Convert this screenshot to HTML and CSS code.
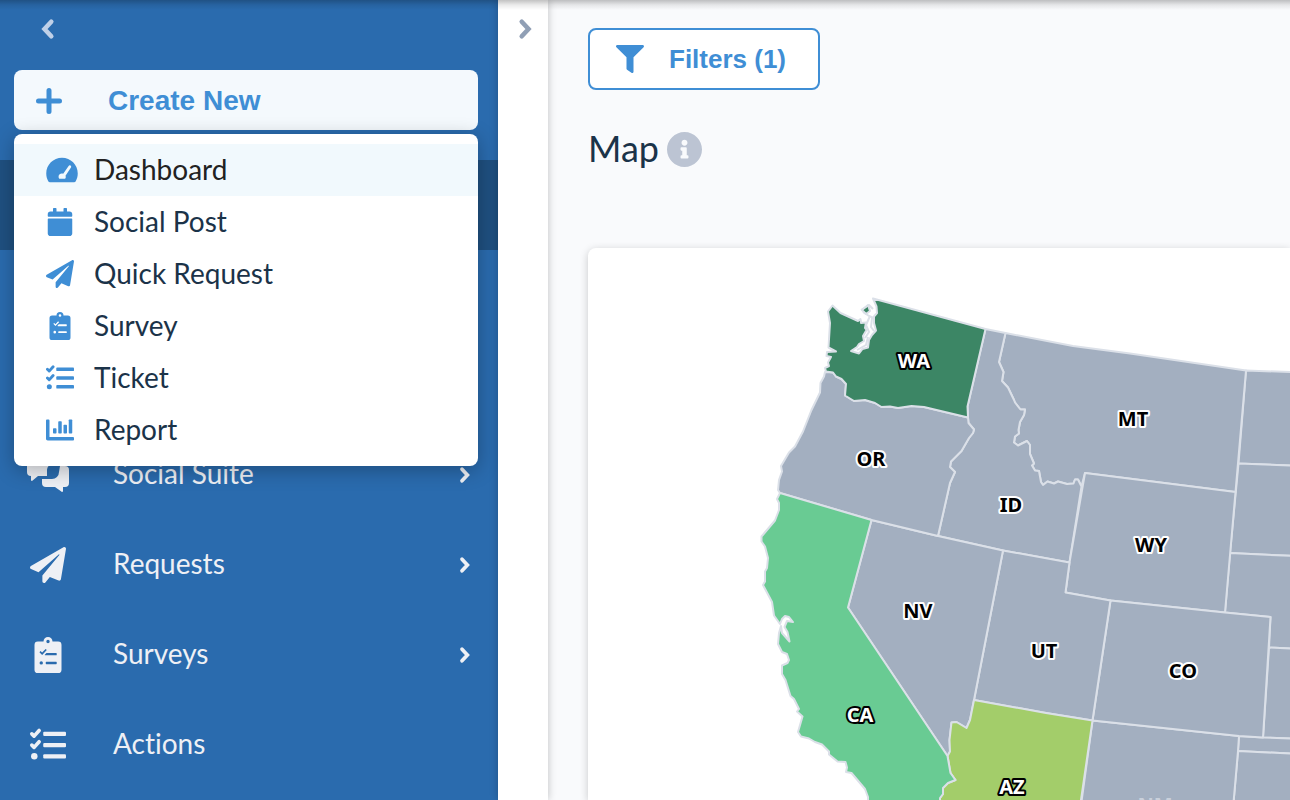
FILE: index.html
```html
<!DOCTYPE html>
<html lang="en">
<head>
<meta charset="utf-8">
<title>Map</title>
<link rel="stylesheet" href="styles.css">
</head>
<body>
<svg class="defs" aria-hidden="true">
  <symbol id="chevron" viewBox="0 0 320 512"><path fill="none" stroke="currentColor" stroke-width="98" stroke-linecap="round" d="M80 100L224 256 80 412"/></symbol>
  <symbol id="plane" viewBox="0 0 512 512"><path d="M476 3.2L12.5 270.6c-18.1 10.4-15.8 35.6 2.2 43.2L121 358.4l287.3-253.2c5.5-4.9 13.3 2.6 8.6 8.3L176 407v80.5c0 23.6 28.5 32.9 42.5 15.8L282 426l124.6 52.2c14.2 6 30.4-2.9 33-18.2l72-432C515 7.8 493.3-6.8 476 3.2z"/></symbol>
  <symbol id="clipboard" viewBox="0 0 512 512"><path fill-rule="evenodd" d="M400 64h-80a64 64 0 0 0-128 0h-80a48 48 0 0 0-48 48v352a48 48 0 0 0 48 48h288a48 48 0 0 0 48-48V112a48 48 0 0 0-48-48zM256 40a24 24 0 1 1 0 48 24 24 0 0 1 0-48zM134 216l16-16 22 22 50-52 17 16-66 70zM234 226h138a8 8 0 0 1 8 8v18a8 8 0 0 1-8 8H218a8 8 0 0 1-8-8zM160 344a24 24 0 1 1 0 48 24 24 0 0 1 0-48zM232 352h140a8 8 0 0 1 8 8v18a8 8 0 0 1-8 8H232a8 8 0 0 1-8-8v-18a8 8 0 0 1 8-8z"/></symbol>
  <symbol id="tasks" viewBox="0 0 512 512"><path fill="none" stroke="currentColor" stroke-width="52" stroke-linecap="round" stroke-linejoin="round" d="M26 98l32 32 72-80M26 258l32 32 72-80"/><circle cx="61" cy="416" r="46"/><rect x="188" y="66" width="324" height="62" rx="16"/><rect x="188" y="226" width="324" height="62" rx="16"/><rect x="188" y="386" width="324" height="62" rx="16"/></symbol>
</svg>
<div class="app">
  <aside class="sidebar">
    <button class="collapse" aria-label="Collapse navigation"><svg class="icon chevron flip"><use href="#chevron"/></svg></button>
    <div class="create">
      <button class="create-button" aria-expanded="true">
        <svg class="plus" viewBox="0 0 26 26"><path d="M13 2.5v21M2.5 13h21"/></svg>
        <span>Create New</span>
      </button>
      <div class="menu" role="menu">
        <button class="menu-item highlighted" role="menuitem"><svg class="icon gauge" viewBox="0 0 576 512"><path fill-rule="evenodd" d="M288 32C129 32 0 161 0 320c0 53 14 102 39 145 6 10 16 15 27 15h444c11 0 21-5 27-15 25-43 39-92 39-145C576 161 447 32 288 32zM443 174c14 9 17 22 9 35L352 361c8 22 7 39-7 55H239c-24-34-16-92 43-98 11 0 20 1 28 5L409 182c8-13 21-15 34-8z"/></svg><span>Dashboard</span></button>
        <button class="menu-item" role="menuitem"><svg class="icon" viewBox="-32 0 512 512"><path d="M12 192h424c6.600 0 12 5.400 12 12v260c0 26.500-21.500 48-48 48H48c-26.500 0-48-21.500-48-48V204c0-6.600 5.400-12 12-12zm436-44v-36c0-26.500-21.500-48-48-48h-48V12c0-6.600-5.400-12-12-12h-40c-6.600 0-12 5.400-12 12v52H160V12c0-6.600-5.400-12-12-12h-40c-6.600 0-12 5.400-12 12v52H48C21.500 64 0 85.500 0 112v36c0 6.600 5.400 12 12 12h424c6.600 0 12-5.400 12-12z"/></svg><span>Social Post</span></button>
        <button class="menu-item" role="menuitem"><svg class="icon"><use href="#plane"/></svg><span>Quick Request</span></button>
        <button class="menu-item" role="menuitem"><svg class="icon"><use href="#clipboard"/></svg><span>Survey</span></button>
        <button class="menu-item" role="menuitem"><svg class="icon"><use href="#tasks"/></svg><span>Ticket</span></button>
        <button class="menu-item" role="menuitem"><svg class="icon" viewBox="0 0 512 512"><path d="M16 64h32c9 0 16 7 16 16v304h432c9 0 16 7 16 16v32c0 9-7 16-16 16H32c-18 0-32-14-32-32V80c0-9 7-16 16-16z"/><rect x="128" y="224" width="64" height="96" rx="14"/><rect x="224" y="96" width="64" height="224" rx="14"/><rect x="320" y="160" width="64" height="160" rx="14"/><rect x="416" y="64" width="64" height="256" rx="14"/></svg><span>Report</span></button>
      </div>
    </div>
    <nav class="nav">
      <div class="nav-current"></div>
      <a class="nav-item" href="#social"><svg class="nav-icon bubbles" viewBox="0 0 40 36"><path d="M4 0h22a4 4 0 0 1 4 4v4h-4a6 6 0 0 0-6 6v6h-9l-6 5q-1 0-1-1v-4a4 4 0 0 1-4-4V4a4 4 0 0 1 4-4z" transform="translate(-1 -1)"/><path d="M32 9h5a4 4 0 0 1 4 4v13a4 4 0 0 1-4 4h-2v4q0 1-1 1l-7-5H18a4 4 0 0 1-4-4v-4h10a7 7 0 0 0 7-7z"/></svg><span>Social Suite</span><svg class="icon arrow"><use href="#chevron"/></svg></a>
      <a class="nav-item" href="#requests"><svg class="nav-icon"><use href="#plane"/></svg><span>Requests</span><svg class="icon arrow"><use href="#chevron"/></svg></a>
      <a class="nav-item" href="#surveys"><svg class="nav-icon"><use href="#clipboard"/></svg><span>Surveys</span><svg class="icon arrow"><use href="#chevron"/></svg></a>
      <a class="nav-item" href="#actions"><svg class="nav-icon"><use href="#tasks"/></svg><span>Actions</span></a>
    </nav>
  </aside>
  <div class="rail">
    <button class="expand" aria-label="Expand panel"><svg class="icon chevron"><use href="#chevron"/></svg></button>
  </div>
  <main class="content">
    <button class="filters">
      <svg class="icon" viewBox="0 0 512 512"><path d="M487.976 0H24.028C2.710 0-8.047 25.866 7.058 40.971L192 225.941V432c0 7.831 3.821 15.170 10.237 19.662l80 55.980C298.020 518.690 320 507.493 320 487.980V225.941l184.947-184.970C520.021 25.896 509.338 0 487.976 0z"/></svg>
      <span>Filters (1)</span>
    </button>
    <div class="heading">
      <h1>Map</h1>
      <svg class="info" viewBox="8 8 496 496"><path d="M256 8C119.043 8 8 119.083 8 256c0 136.997 111.043 248 248 248s248-111.003 248-248C504 119.083 392.957 8 256 8zm0 110c23.196 0 42 18.804 42 42s-18.804 42-42 42-42-18.804-42-42 18.804-42 42-42zm56 254c0 6.627-5.373 12-12 12h-88c-6.627 0-12-5.373-12-12v-24c0-6.627 5.373-12 12-12h12v-64h-12c-6.627 0-12-5.373-12-12v-24c0-6.627 5.373-12 12-12h64c6.627 0 12 5.373 12 12v100h12c6.627 0 12 5.373 12 12v24z"/></svg>
    </div>
    <section class="card">
      <svg class="map" viewBox="588 248 702 552" preserveAspectRatio="xMinYMin slice" role="img" aria-label="Map of states">
        <g class="states">
          <path d="M1246 370.500L1400 376V470L1238.500 463.500z"/>
          <path d="M1238.500 463.500L1400 470V561L1230 553z"/>
          <path d="M1230 553L1400 561V653L1269 647.500 1270.500 617 1225 612.500z"/>
          <path d="M1269 647.500L1400 653V743L1263 737.500z"/>
          <path d="M1239 736L1263 737.500 1400 743V759L1238 751z"/>
          <path d="M1238 751L1400 759V820H1232z"/>
          <path d="M1092.500 720.500L1239 736 1238 751 1232 820H1079z"/>
          <path d="M1005.500 333L1073 346 1130 353.500 1246 370.500 1235.500 492 1085 473 1081.500 486.500 1078 479.500 1075 479.500 1073.500 483.500 1067 484 1058 481.500 1054 483.500 1047.500 481.500 1043 485 1041 482 1039 471 1035 470.500 1032 465.500 1034 463.500 1030 454 1030 445 1027 441 1018 445.500 1014 442.500 1015 436.500 1019 433.500 1018.500 430 1020 422 1024 415 1025 409.500 1020.500 409.500 1015 402.500 1014 400 1008 387.500 1002 381 1003.500 372 999 362z"/>
          <path d="M985.500 329L1005.500 333 999 362 1003.500 372 1002 381 1008 387.500 1014 400 1015 402.500 1020.500 409.500 1025 409.500 1024 415 1020 422 1018.500 430 1019 433.500 1015 436.500 1014 442.500 1018 445.500 1027 441 1030 445 1030 454 1034 463.500 1032 465.500 1035 470.500 1039 471 1041 482 1043 485 1047.500 481.500 1054 483.500 1058 481.500 1067 484 1073.500 483.500 1075 479.500 1078 479.500 1081.500 486.500 1069.500 562.500 1003 550.500 938 536 950 483 955 472 950 467 951 461.500 961.500 451 969 438 973 433 974 429.500 968.500 423 968 417.500 967.500 406.500z"/>
          <path d="M1085 473L1235.500 492 1225 612.500 1110.500 600.500 1065.500 592.500 1069.500 562.500z"/>
          <path d="M1110.500 600.500L1225 612.500 1270.500 617 1263 737.500 1239 736 1092.500 720.500z"/>
          <path d="M1003 550.500L1069.500 562.500 1065.500 592.500 1110.500 600.500 1092.500 720.500 1046 713 974 700z"/>
          <path d="M871.500 520L938 536 1003 550.500 974 700 970 720 966.500 728 956.500 722 951.500 722.500 949.500 740 950 751.500 947.500 756 848 607.500z"/>
          <path d="M825 372L833 372.500 836 376.500 841.500 379 846 384 845 395.500 854 401 865 400 875 403 881.500 407 890 406.500 898 408 911.500 406 924 407 968 417.500 968.500 423 974 429.500 973 433 969 438 961.500 451 951 461.500 950 467 955 472 950 483 938 536 871.500 520 780 493 778 490 779 480 782 471.500 781 466 789 452.500 795 446.500 803 431.500 811.500 410 820 392.500 820.500 383 824 376.500z"/>
          <path class="az" d="M974 700L1046 713 1092.500 720.500 1081 800 1079 820H940L940 798 943 794 943 788 948 783 955.500 780 950.500 773 947.500 756 950 751.500 949.500 740 951.500 722.500 956.500 722 966.500 728 970 720z"/>
          <path class="ca" d="M780 493L777 499 779 503 779 510 775 520.500 761.500 536.500 761.500 541.500 765 546.500 768 558 767 568 765 571.500 765 581.500 763 585 772 602 774 615.500 780 624 782 619 785 616 789 617 793 622 787 621 784.500 627 787.500 632 789.500 641.500 782 633 781 626 779 633 778 644 782 652 787 654 789 660 787.500 663 782 665.500 782 674 785.500 680 790.500 696 794 699 799 709 797 711.500 802.500 716.500 798 732 801 736.500 809 738.500 815 742 822 744.500 829 751.500 829 754.500 837.500 761.500 845.500 762 847 767.500 846 772 851.500 773 865 789 868 797 868 820H940V798L943 794 943 788 948 783 955.500 780 950.500 773 947.500 756 848 607.500 871.500 520z"/>
          <path class="wa" d="M873 298.500L985.500 329 967.500 406.500 968 417.500 924 407 911.500 406 898 408 890 406.500 881.500 407 875 403 865 400 854 401 845 395.500 846 384 841.500 379 836 376.500 833 372.500 826 371.500 825 368 829 366 828 362.500 831 357 826.500 356 827 352 836 351.500 828.500 347.500 830 323 828 311.500 832.500 305.500 840.500 313 858 321 860.500 319 861 323 866 322.500 865 328 866.500 330 863 336 864 341 859 344 857 347 851 351 859 353.500 862.500 349 868 347.500 869 340 872 335 876 330.500 874 323 874 316.500 877 313 876.500 306.500z"/>
          <path class="wa" d="M862 310L868 305 870 311 866 314z"/>
          <path class="coast" d="M861 310L869 305 873 309M863 312L869 316 874 318M870 316L866 325 869 332 865 338M872 318L871 327 874 331M868 337L866 345 857 350"/>
        </g>
        <g class="labels">
          <text x="1133" y="426">MT</text>
          <text x="871" y="466">OR</text>
          <text x="1011" y="512">ID</text>
          <text x="1151" y="552">WY</text>
          <text x="918" y="618">NV</text>
          <text x="1044" y="658">UT</text>
          <text x="1183" y="678">CO</text>
          <text class="faded" x="1155" y="812">NM</text>
          <text class="dark" x="914" y="368">WA</text>
          <text class="dark" x="860" y="722">CA</text>
          <text class="dark" x="1012" y="794">AZ</text>
        </g>
      </svg>
    </section>
  </main>
</div>
</body>
</html>
```
FILE: styles.css
```css
* { box-sizing: border-box; }

body {
  margin: 0;
  font-family: Lato, "Noto Sans", sans-serif;
  font-size: 28px;
  font-variant-ligatures: none;
  color: #1b3349;
  background: #f9fafc;
}

button {
  border: 0;
  padding: 0;
  background: none;
  font: inherit;
  font-variant-ligatures: none;
  color: inherit;
  cursor: pointer;
}

svg { fill: currentColor; flex: none; }
.defs { position: absolute; width: 0; height: 0; }
.icon { display: block; width: 28px; height: 28px; overflow: visible; }
.chevron { width: 15px; height: 24px; }
.flip { transform: scaleX(-1); }

.app {
  display: flex;
  height: 100vh;
  overflow: hidden;
  position: relative;
}

/* shadow cast by the page header */
.app::before {
  content: "";
  position: absolute;
  inset: 0 0 auto;
  height: 10px;
  z-index: 5;
  pointer-events: none;
  background: linear-gradient(rgba(0, 0, 0, .24), rgba(0, 0, 0, .08) 50%, transparent);
}

.sidebar {
  flex: 0 0 498px;
  background: #2a6bae;
  color: #eef0f5;
}

.collapse {
  display: flex;
  align-items: center;
  height: 58px;
  padding: 0 40px;
  color: #bfd0e8;
}

.create {
  position: relative;
  padding: 12px 20px 0 14px;
}

.create-button {
  display: flex;
  align-items: center;
  gap: 46px;
  width: 100%;
  height: 60px;
  padding: 2px 22px 0;
  border-radius: 8px;
  background: #f4f9fd;
  color: #3f8ed5;
  font: bold 28px "Liberation Sans", sans-serif;
}

.plus {
  width: 26px;
  height: 26px;
  stroke: currentColor;
  stroke-width: 5;
  stroke-linecap: round;
}

.menu {
  position: absolute;
  top: 76px;
  left: 14px;
  right: 20px;
  z-index: 2;
  padding: 10px 0;
  border-radius: 8px;
  background: #fff;
  box-shadow: 0 4px 20px rgba(0, 0, 0, .28);
}

.menu-item {
  display: flex;
  align-items: center;
  gap: 20px;
  width: 100%;
  height: 52px;
  padding: 0 32px;
  color: #1b3349;
}

.menu-item span { padding-bottom: 2px; }
.menu-item .icon { color: #3f8ed5; }
.menu-item .gauge { width: 32px; margin-right: -4px; }
.highlighted { background: #f1f9fd; color: #222; }

.nav { padding-top: 30px; }

.nav-current {
  height: 90px;
  margin-bottom: 180px;
  background: #1f5080;
}

.nav-item {
  display: flex;
  align-items: center;
  height: 90px;
  padding: 0 27px 0 28px;
  color: inherit;
  text-decoration: none;
}

.nav-item span { padding-bottom: 4px; }
.nav-icon { width: 40px; height: 36px; margin-right: 45px; overflow: visible; }
.arrow { width: 12px; height: 20px; margin-left: auto; }

.rail {
  flex: 0 0 50px;
  z-index: 1;
  background: #fff;
  box-shadow: 0 0 8px rgba(0, 0, 0, .24);
}

.expand {
  display: flex;
  align-items: center;
  justify-content: center;
  width: 100%;
  height: 58px;
  padding-left: 4px;
  color: #909fb5;
}

.content {
  flex: 1;
  min-width: 0;
  display: flex;
  flex-direction: column;
  align-items: flex-start;
  padding: 28px 0 0 40px;
}

.filters {
  display: flex;
  align-items: center;
  gap: 25px;
  height: 62px;
  padding: 0 32px 0 26px;
  border: 2px solid #3f8ed5;
  border-radius: 8px;
  background: #fff;
  color: #3f8ed5;
  font: bold 26px "Liberation Sans", sans-serif;
}

.heading {
  display: flex;
  align-items: center;
  gap: 8px;
  height: 118px;
  margin-bottom: 40px;
}

h1 { margin: 0; padding-bottom: 2px; font-size: 36px; font-weight: 400; }
.info { width: 35px; height: 35px; color: #bcc4d3; }

.card {
  flex: 1;
  width: 100%;
  min-height: 0;
  border-radius: 8px 0 0 0;
  background: #fff;
  box-shadow: 0 2px 8px rgba(0, 0, 0, .2);
}

.map { display: block; width: 100%; height: 100%; }

.states path {
  fill: #a3afc0;
  stroke: #dbe0e8;
  stroke-width: 2;
  stroke-linejoin: round;
}

.states .wa { fill: #3c8665; }
.states .ca { fill: #69cb93; }
.states .az { fill: #a3cd6a; }
.states .coast { fill: none; }

.labels text {
  font: bold 20px "Noto Sans", sans-serif;
  text-anchor: middle;
  fill: #000;
  stroke: #fff;
  stroke-width: 4;
  stroke-linejoin: round;
  paint-order: stroke;
}

.labels .dark { fill: #fff; stroke: #000; }
.labels .faded { fill: #c9d0db; stroke: none; }
```
